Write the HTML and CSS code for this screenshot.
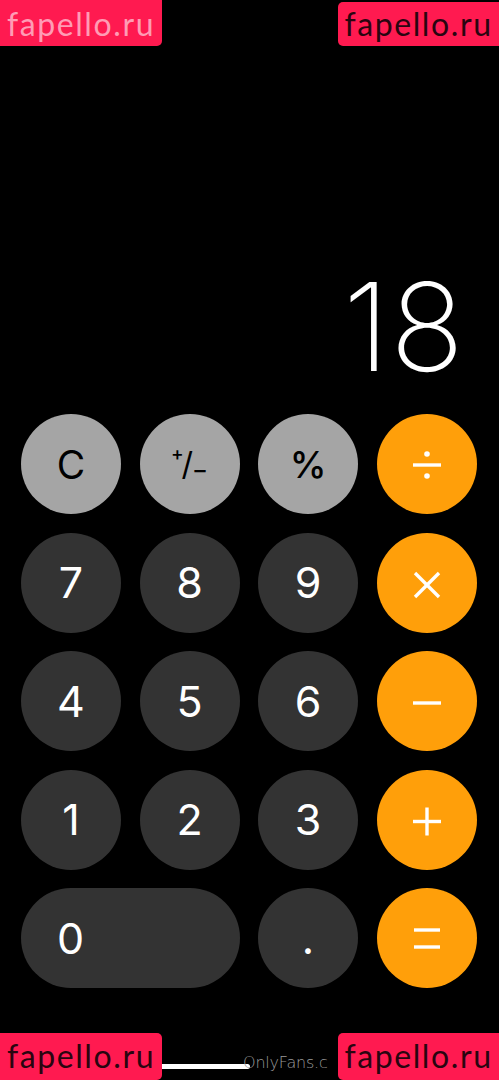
FILE: index.html
```html
<!DOCTYPE html>
<html>
<head>
<meta charset="utf-8">
<link rel="stylesheet" href="styles.css">
</head>
<body>
<div class="screen">
  <div class="display"><span class="value">18</span></div>
  <div class="keypad">
    <div class="key fn">C</div>
    <div class="key fn pm"><span class="sup">+</span><span class="slash">/</span><span class="sub">−</span></div>
    <div class="key fn pct">%</div>
    <div class="key op" aria-label="÷">
      <svg class="op-icon" viewBox="0 0 100 100"><line x1="36" y1="51" x2="64" y2="51"/><circle cx="50" cy="40" r="2.8"/><circle cx="50" cy="62" r="2.8"/></svg>
    </div>

    <div class="key num">7</div>
    <div class="key num">8</div>
    <div class="key num">9</div>
    <div class="key op" aria-label="×">
      <svg class="op-icon" viewBox="0 0 100 100"><line x1="38" y1="40" x2="62" y2="64"/><line x1="62" y1="40" x2="38" y2="64"/></svg>
    </div>

    <div class="key num">4</div>
    <div class="key num">5</div>
    <div class="key num">6</div>
    <div class="key op" aria-label="−">
      <svg class="op-icon" viewBox="0 0 100 100"><line x1="36" y1="52" x2="64" y2="52"/></svg>
    </div>

    <div class="key num">1</div>
    <div class="key num">2</div>
    <div class="key num">3</div>
    <div class="key op" aria-label="+">
      <svg class="op-icon" viewBox="0 0 100 100"><line x1="36" y1="51.5" x2="64" y2="51.5"/><line x1="50" y1="37.5" x2="50" y2="65.5"/></svg>
    </div>

    <div class="key num zero">0</div>
    <div class="key num">.</div>
    <div class="key op" aria-label="=">
      <svg class="op-icon" viewBox="0 0 100 100"><line x1="37" y1="42" x2="63" y2="42"/><line x1="37" y1="59" x2="63" y2="59"/></svg>
    </div>
  </div>
  <div class="home-area">
    <div class="home-bar"></div>
    <span class="of-text">OnlyFans.c</span>
  </div>
</div>
<div class="wm wm-tl light">fapello.ru</div>
<div class="wm wm-tr">fapello.ru</div>
<div class="wm wm-bl">fapello.ru</div>
<div class="wm wm-br">fapello.ru</div>
</body>
</html>
```
FILE: styles.css
```css
html, body {
  margin: 0;
  padding: 0;
  background: #000;
}
body {
  width: 499px;
  height: 1080px;
  overflow: hidden;
  position: relative;
  font-family: Inter, "Liberation Sans", sans-serif;
}
.screen {
  height: 1080px;
  display: flex;
  flex-direction: column;
}
.display {
  flex: 1;
  display: flex;
  justify-content: flex-end;
  align-items: flex-end;
  padding: 0 34px 26px 0;
}
.value {
  color: #fff;
  font-size: 122px;
  font-weight: 200;
  line-height: 1;
  letter-spacing: 1px;
}
.keypad {
  display: grid;
  grid-template-columns: repeat(4, 100px);
  grid-auto-rows: 100px;
  gap: 18.5px;
  padding: 0 0 0 21px;
}
.key {
  position: relative;
  border-radius: 50px;
  display: flex;
  align-items: center;
  justify-content: center;
  font-size: 43px;
  font-weight: 400;
  line-height: 1;
}
.fn {
  background: #a5a5a5;
  color: #000;
  font-size: 39px;
}
.num {
  background: #333333;
  color: #fff;
}
.op {
  background: #ff9f0a;
}
.op-icon {
  width: 100px;
  height: 100px;
  stroke: #fff;
  stroke-width: 3.4;
  fill: #fff;
}
.op-icon circle {
  stroke: none;
}
.zero {
  grid-column: span 2;
  justify-content: flex-start;
  padding-left: 36px;
}
.pct {
  font-weight: 500;
  font-size: 37px;
}
.pm {
  font-size: 28px;
  font-weight: 500;
  align-items: center;
}
.pm span {
  display: inline-block;
  line-height: 1;
}
.pm .sup {
  font-size: 19px;
  align-self: flex-start;
  margin-top: 30px;
  margin-right: -2px;
}
.pm .slash {
  font-size: 32px;
  font-weight: 400;
}
.pm .sub {
  font-size: 24px;
  align-self: flex-end;
  margin-bottom: 32px;
  margin-left: -1px;
}
.home-area {
  height: 92px;
  position: relative;
}
.home-bar {
  position: absolute;
  left: 140px;
  width: 110px;
  top: 76px;
  height: 5px;
  border-radius: 3px;
  background: #fff;
}
.of-text {
  position: absolute;
  left: 243px;
  top: 65px;
  color: #9a9a9a;
  font-family: "DejaVu Sans", sans-serif;
  font-size: 16px;
  font-weight: 300;
  letter-spacing: -0.2px;
  white-space: nowrap;
}
.wm {
  position: absolute;
  background: #ff1a50;
  color: #2a0510;
  font-family: "Lato", "Liberation Sans", sans-serif;
  font-weight: 400;
  font-size: 32px;
  line-height: 41px;
  height: 41px;
  box-sizing: border-box;
  width: 162px;
  text-align: center;
  letter-spacing: 1.6px;
}
.wm.light {
  color: rgba(255, 200, 215, 0.75);
}
.wm-tl {
  left: 0;
  top: 0;
  height: 46px;
  line-height: 48px;
  border-radius: 0 0 5px 0;
}
.wm-tr {
  right: 0;
  top: 2px;
  width: 161px;
  height: 44px;
  line-height: 44px;
  border-radius: 5px 0 0 5px;
}
.wm-bl {
  left: 0;
  top: 1033px;
  height: 47px;
  line-height: 46px;
  border-radius: 0 5px 5px 0;
}
.wm-br {
  right: 0;
  top: 1033px;
  width: 161px;
  height: 47px;
  line-height: 46px;
  border-radius: 5px 0 0 5px;
}
```
